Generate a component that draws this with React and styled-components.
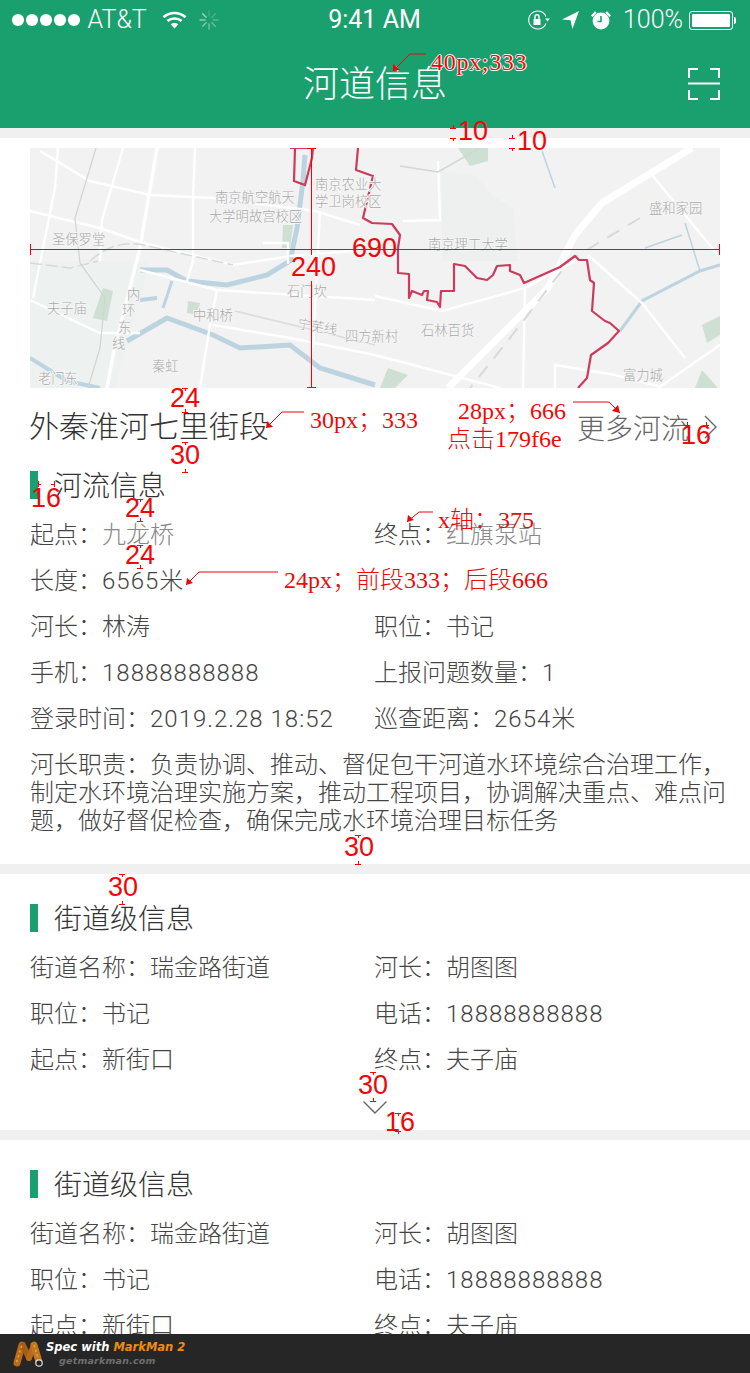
import styled, { createGlobalStyle } from "styled-components";

const GlobalStyle = createGlobalStyle`
  html, body {
    margin: 0;
    padding: 0;
    background: #fff;
  }
  body {
    font-family: Roboto, "Noto Sans CJK SC", sans-serif;
    font-weight: 300;
    color: #333;
  }
`;

const riverInfo = [
  [["起点：", "九龙桥", true], ["终点：", "红旗泵站", true]],
  [["长度：", "6565米"], null],
  [["河长：", "林涛"], ["职位：", "书记"]],
  [["手机：", "18888888888"], ["上报问题数量：", "1"]],
  [["登录时间：", "2019.2.28 18:52"], ["巡查距离：", "2654米"]],
];

const streetInfo = [
  [["街道名称：", "瑞金路街道"], ["河长：", "胡图图"]],
  [["职位：", "书记"], ["电话：", "18888888888"]],
  [["起点：", "新街口"], ["终点：", "夫子庙"]],
];

const mapLabels = [
  ["圣保罗堂", 22, 96],
  ["夫子庙", 17, 165],
  ["老门东", 8, 235],
  ["南京航空航天", 185, 54],
  ["大学明故宫校区", 179, 73],
  ["南京农业大", 285, 41],
  ["学卫岗校区", 285, 58],
  ["石门坎", 257, 148],
  ["中和桥", 163, 172],
  ["秦虹", 122, 223],
  ["四方新村", 315, 193],
  ["南京理工大学", 398, 101],
  ["石林百货", 391, 187],
  ["盛和家园", 619, 65],
  ["富力城", 593, 232],
];

const thinRoads = [
  "M10 3L60 33L120 47L183 50L285 63L330 77",
  "M0 63L70 80L113 95L203 117L260 108L323 103",
  "M93 0L72 72L70 113",
  "M165 0L163 50L163 113L157 133",
  "M28 0L25 40L3 150",
  "M0 152L70 185L110 185",
  "M110 122L187 142L345 152",
  "M187 142L180 177L170 240",
  "M290 63L283 200",
  "M183 177L260 190L345 207L470 240",
  "M408 13L410 72L373 73",
  "M345 148L412 163L495 140L545 113",
  "M558 107L612 155L655 210",
  "M622 27L688 107",
  "M628 240L690 197",
  "M525 240L525 217L585 227L628 238",
  "M495 140L493 240",
  "M233 95L258 95L258 116",
];

const waterways = [
  ["M110 122L137 122L157 133L197 137L237 127L260 113L267 80L273 33L275 7", 5],
  ["M97 193L137 170L183 187L210 200L260 197L290 220L345 237", 5],
  ["M0 210L37 233L70 240", 4],
  ["M110 152L127 150", 4],
  ["M142 133L133 160", 3],
  ["M590 183L612 153L670 123L690 117", 3],
  ["M615 100L652 87", 1.5],
  ["M670 123L655 75", 1.5],
  ["M512 3L525 40", 1.5],
];

const parks = [
  "M73 140L83 143L77 173L63 170Z",
  "M158 153L170 155L167 167L157 165Z",
  "M253 77L263 77L260 100L252 100Z",
  "M672 177L690 168L690 187L677 195Z",
  "M428 0L458 0L458 13L440 18Z",
  "M358 220L378 227L365 240L350 240Z",
  "M665 240L672 222L688 240Z",
];

const Page = styled.div`
  position: relative;
  width: 750px;
  height: 1373px;
  overflow: hidden;
  display: flex;
  flex-direction: column;
  background: #fff;
`;

const Scroll = styled.main`
  flex: 1;
  min-height: 0;
  overflow: hidden;
`;

const Header = styled.header`
  height: 128px;
  background: #1a9f6e;
  color: #fff;
  display: flex;
  flex-direction: column;
`;

const StatusBar = styled.div`
  height: 40px;
  display: grid;
  grid-template-columns: 1fr auto 1fr;
  align-items: center;
  padding: 0 13px 0 12px;
  font-size: 25px;
  line-height: 40px;
`;

const StatusGroup = styled.div`
  display: flex;
  align-items: center;
  gap: ${(p) => p.$gap || 0}px;
  margin-left: ${(p) => p.$indent || 0}px;
  justify-content: ${(p) => (p.$right ? "flex-end" : "flex-start")};
`;

const Signal = styled.div`
  display: flex;
  gap: 2.5px;
  margin-right: 8px;
`;

const Dot = styled.i`
  width: 11.5px;
  height: 11.5px;
  border-radius: 50%;
  background: #fff;
`;

const Clock = styled.span`
  font-weight: 400;
`;

const Battery = styled.div`
  position: relative;
  width: 44px;
  height: 19px;
  box-sizing: border-box;
  border: 1px solid #fff;
  border-radius: 3px;
  padding: 2px;
  margin: 0 4px 0 -5px;
  &::before {
    content: "";
    display: block;
    height: 100%;
    background: #fff;
    border-radius: 1px;
  }
  &::after {
    content: "";
    position: absolute;
    right: -4px;
    top: 5px;
    width: 2px;
    height: 7px;
    background: #fff;
    border-radius: 0 2px 2px 0;
  }
`;

const NavBar = styled.div`
  flex: 1;
  display: grid;
  grid-template-columns: 1fr auto 1fr;
  align-items: center;
  padding: 0 30px 0 30px;
`;

const NavTitle = styled.h1`
  grid-column: 2;
  margin: 2px 0 0;
  font-size: 36px;
  line-height: 44px;
  font-weight: 300;
  color: #fff;
`;

const ScanButton = styled.div`
  grid-column: 3;
  justify-self: end;
  display: flex;
  margin-top: -1px;
`;

const Divider = styled.div`
  height: 10px;
  background: #f0f0f0;
`;

const Section = styled.section`
  padding: ${(p) => p.$top}px 30px ${(p) => p.$bottom || 0}px;
`;

const MapFrame = styled.div`
  width: 690px;
  height: 240px;
  background: #f2f2f2;
  svg {
    display: block;
  }
`;

const MapLabel = styled.text`
  font-family: "Noto Sans CJK SC", sans-serif;
  font-size: 13.3px;
  fill: #a9a9a9;
  stroke: #f5f5f5;
  stroke-width: 2px;
  paint-order: stroke;
`;

const ReachRow = styled.div`
  height: 60px;
  margin-top: 9px;
  margin-bottom: 14px;
  display: flex;
  align-items: center;
  justify-content: space-between;
`;

const ReachName = styled.h2`
  margin: 0 0 0 -1px;
  font-size: 30px;
  line-height: 44px;
  font-weight: 300;
  color: #333;
`;

const MoreLink = styled.a`
  display: flex;
  align-items: center;
  gap: 15px;
  margin: -1px 3px 0 0;
  font-size: 28px;
  color: #666;
`;

const SectionTitle = styled.h3`
  margin: 0 0 13px;
  height: 28px;
  display: flex;
  align-items: center;
  gap: 16px;
  font-size: 28px;
  line-height: 28px;
  font-weight: 300;
  color: #333;
  &::before {
    content: "";
    width: 8px;
    height: 28px;
    background: #1a9f6e;
  }
  span {
    margin-top: 4px;
  }
`;

const InfoGrid = styled.div`
  display: grid;
  grid-template-columns: 344px 1fr;
  grid-auto-rows: 46px;
`;

const InfoCell = styled.div`
  font-size: 24px;
  line-height: 46px;
  color: #444;
  white-space: nowrap;
`;

const InfoValue = styled.span`
  color: ${(p) => (p.$muted ? "#888" : "#444")};
  letter-spacing: ${(p) => (p.$digits ? "1px" : "0")};
`;

const Duty = styled.p`
  margin: 9px 0 0;
  width: 700px;
  font-size: 24px;
  line-height: 28px;
  color: #444;
`;

const Expand = styled.div`
  display: flex;
  justify-content: center;
  padding: 18px 0 16px;
  svg {
    display: block;
  }
`;

const SpecBar = styled.footer`
  flex: none;
  height: 39px;
  background: #262626;
  display: flex;
  align-items: center;
  gap: 2px;
  padding-left: 12px;
  position: relative;
`;

const SpecText = styled.div`
  font-family: "DejaVu Sans", sans-serif;
  font-style: italic;
  font-weight: 700;
  font-size: 11.5px;
  line-height: 13px;
  color: #fff;
  white-space: nowrap;
  b {
    color: #f28c0f;
  }
`;

const SpecSite = styled.div`
  margin-left: 13px;
  color: #6f6f6f;
  font-size: 9.5px;
  letter-spacing: 0.2px;
`;

const MarkLayer = styled.svg`
  position: absolute;
  left: 0;
  top: 0;
  pointer-events: none;
`;

const Note = styled.span`
  position: absolute;
  left: ${(p) => p.$x}px;
  top: ${(p) => p.$y}px;
  transform: translateY(-50%);
  font-family: "Liberation Serif", "Noto Sans CJK SC", serif;
  font-size: 24px;
  font-weight: 300;
  line-height: 28px;
  color: #f00808;
  white-space: nowrap;
`;

const Measure = styled(Note)`
  font-family: "Liberation Sans", sans-serif;
  font-size: 27px;
`;

const HaloNote = styled(Note)`
  letter-spacing: 0.7px;
  text-shadow: 1px 0 #fff, -1px 0 #fff, 0 1px #fff, 0 -1px #fff;
`;

const digitsOnly = (v) => /^[\d.: 米]+$/.test(v);

const InfoRows = ({ rows }) => (
  <InfoGrid>
    {rows.flat().map((cell, i) =>
      cell ? (
        <InfoCell key={i}>
          {cell[0]}
          <InfoValue $digits={digitsOnly(cell[1])} $muted={cell[2]}>
            {cell[1]}
          </InfoValue>
        </InfoCell>
      ) : (
        <div key={i} />
      )
    )}
  </InfoGrid>
);

const Wifi = () => (
  <svg width="25" height="18" viewBox="0 0 25 18" fill="none" stroke="#fff" strokeWidth="2.6">
    <path d="M1.5 6.2C7.5 .6 17.5 .6 23.5 6.2" />
    <path d="M5.4 10C9.2 6.6 15.8 6.6 19.6 10" />
    <path d="M12.5 17.6L8.6 13.2C10.8 11.5 14.2 11.5 16.4 13.2Z" fill="#fff" stroke="none" />
  </svg>
);

const Spinner = () => (
  <svg width="20" height="20" viewBox="0 0 20 20" stroke="#fff" strokeWidth="1.4" strokeLinecap="round">
    {[...Array(8)].map((_, i) => (
      <line key={i} x1="10" y1="1" x2="10" y2="6" opacity={0.15 + i * 0.06} transform={`rotate(${i * 45} 10 10)`} />
    ))}
  </svg>
);

const OrientationLock = () => (
  <svg width="24" height="20" viewBox="0 0 24 20" fill="none" stroke="#fff" strokeWidth="1.1">
    <path d="M19 6.5A9 9 0 1 0 19 13.5" />
    <path d="M18 8.5h5l-2.5 3z" fill="#fff" stroke="none" />
    <rect x="6.5" y="9" width="7" height="6" fill="#fff" stroke="none" />
    <path d="M8 9V6.8a2 2 0 0 1 4 0V9" strokeWidth="1.4" />
  </svg>
);

const LocationArrow = () => (
  <svg width="17" height="18" viewBox="0 0 17 18" fill="#fff">
    <path d="M17 0L0 8.4L8.6 9.2L10.4 18Z" />
  </svg>
);

const Alarm = () => (
  <svg width="22" height="20" viewBox="0 0 22 20" fill="#fff">
    <circle cx="11" cy="11" r="8.4" />
    <path d="M1 5.5L5 1.2L6.8 2.8L2.6 7Z M21 5.5L17 1.2L15.2 2.8L19.4 7Z" />
    <path d="M11 6v5.5h-3.5" fill="none" stroke="#1a9f6e" strokeWidth="1.6" />
  </svg>
);

const ScanIcon = () => (
  <svg width="32" height="32" viewBox="0 0 32 32" fill="none" stroke="#fff" strokeWidth="2">
    <path d="M1 10V1H10M22 1H31V10M1 22V31H10M22 31H31V22" />
    <path d="M0 15.5H32" />
  </svg>
);

const RiverMap = () => (
  <MapFrame>
    <svg width="690" height="240" viewBox="0 0 690 240" fill="none">
      <path d="M0 113L120 113L85 240L0 240Z" fill="#edf1f0" />
      <path d="M412 23L445 27L462 47L483 60L488 113L412 113Z" fill="#eef0ef" />
      {parks.map((d) => (
        <path key={d} d={d} fill="#cde0d3" />
      ))}
      {waterways.map(([d, w]) => (
        <path key={d} d={d} stroke="#bcd4df" strokeWidth={w} />
      ))}
      {thinRoads.map((d) => (
        <path key={d} d={d} stroke="#fff" strokeWidth="2.4" />
      ))}
      <path d="M127 0L110 100L83 207L77 240" stroke="#fff" strokeWidth="3.5" />
      <path d="M662 0L572 55L545 87L518 140L418 240" stroke="#fff" strokeWidth="7" />
      <path d="M60 113C80 95 100 93 118 98L203 117" stroke="#d8d8d8" strokeWidth="1.5" strokeDasharray="12 4" />
      <path d="M0 115L40 120L68 113" stroke="#d8d8d8" strokeWidth="1.5" strokeDasharray="12 4" />
      <path d="M66 0L45 70L50 115L75 150L70 200L58 240" stroke="#d0d4d0" strokeWidth="1.2" />
      <path d="M205 163L345 197" stroke="#dcdcdc" strokeWidth="1.6" />
      <path d="M610 70L540 112L480 190L440 240" stroke="#d9d9d9" strokeWidth="2" strokeDasharray="14 10" />
      <path d="M450 0L408 24L370 18" stroke="#d0d8d2" strokeWidth="1.5" />

      <path d="M260 0H282M265 0L264 33L275 37L282 10L283 0" stroke="#cc3a5c" strokeWidth="2.2" />
      <path
        d="M328 0L326 22L343 28L333 70L342 75L362 76L370 87L368 100L368 125L379 126L379 150L382 143L392 147L394 143L398 143L397 152L407 154L410 159L411 143L424 143L424 116L435 118L447 130L457 132L463 127L467 118L480 117L480 123L490 127L494 135L530 119L545 108L549 112L557 112L560 132L564 135L562 163L575 173L580 175L589 183L578 195L561 207L557 230L548 240"
        stroke="#cc3a5c"
        strokeWidth="2.2"
        strokeLinejoin="round"
      />

      {mapLabels.map(([text, x, y]) => (
        <MapLabel key={text} x={x} y={y}>
          {text}
        </MapLabel>
      ))}
      <MapLabel x={97} y={151}>内</MapLabel>
      <MapLabel x={92} y={167}>环</MapLabel>
      <MapLabel x={88} y={184}>东</MapLabel>
      <MapLabel x={82} y={200}>线</MapLabel>
      <MapLabel x={267} y={180} transform="rotate(10 267 180)">宁芜线</MapLabel>
    </svg>
  </MapFrame>
);

const MarkManLogo = () => (
  <svg width="32" height="28" viewBox="0 0 32 28" fill="none">
    <path d="M5 23L10 5" stroke="#b8691c" strokeWidth="7" strokeLinecap="round" />
    <path d="M11 5L17 18" stroke="#a55c16" strokeWidth="6" strokeLinecap="round" />
    <path d="M22 5L17 18" stroke="#b8691c" strokeWidth="6" strokeLinecap="round" />
    <path d="M22 5L27 22" stroke="#c4761f" strokeWidth="7" strokeLinecap="round" />
    <path d="M4.5 22L10 5M22 5L26 18" stroke="#e8a544" strokeWidth="1.5" strokeDasharray="2 3" />
    <circle cx="27" cy="23" r="3.2" fill="#222" stroke="#ddd" strokeWidth="1.2" />
  </svg>
);

const T = (x, y, dir) => `M${x - 3} ${y}.5h6M${x}.5 ${y}v${dir * 3}`;
const Side = (x, y, dir) => `M${x}.5 ${y - 3}v6M${x} ${y}.5h${dir * 3}`;

const markPaths = [
  "M30 249.5H720M30.5 244V255M719.5 244V255",
  "M311.5 148V255M311.5 281V388M307 148.5H316M307 387.5H316",
  T(453, 128, -1), T(453, 138, 1),
  T(512, 138, -1), T(512, 148, 1),
  T(185, 388, 1), T(185, 412, -1),
  T(185, 442, 1), T(185, 472, -1),
  Side(687, 425, -1), Side(706, 425, 1),
  Side(38, 484, 1), Side(54, 484, -1),
  T(140, 499, 1), T(140, 521, -1),
  T(140, 545, 1), T(140, 568, -1),
  T(358, 835, 1), T(358, 864, -1),
  T(122, 874, 1), T(122, 904, -1),
  T(373, 1072, 1), T(373, 1101, -1),
  T(398, 1113, 1), T(398, 1131, 1),
];

const leaders = [
  ["M426 54H410L393 71", "393,71 393,64 400,70"],
  ["M304 412H282L266 428", "266,428 267,421 273,427"],
  ["M573 402H609L620 413", "620,413 612,411 618,405"],
  ["M433 512H419L407 522", "407,522 408,515 414,520"],
  ["M278 572H199L186 585", "186,585 187,578 193,583"],
];

const Annotations = () => (
  <>
    <MarkLayer width="750" height="1373" fill="none">
      <path d={markPaths.join("")} stroke="#f00" strokeWidth="1" />
      {leaders.map(([d, arrow]) => (
        <g key={d}>
          <path d={d} stroke="#e3090d" strokeWidth="1" />
          <polygon points={arrow} fill="#e3090d" />
        </g>
      ))}
    </MarkLayer>
    <HaloNote $x={431} $y={62}>40px;333</HaloNote>
    <Note $x={310} $y={420}>30px；333</Note>
    <Note $x={458} $y={411}>28px；666</Note>
    <Note $x={447} $y={439}>点击179f6e</Note>
    <Note $x={438} $y={520}>x轴：375</Note>
    <Note $x={284} $y={580}>24px；前段333；后段666</Note>
    <Measure $x={458} $y={131}>10</Measure>
    <Measure $x={517} $y={141}>10</Measure>
    <Measure $x={291} $y={267}>240</Measure>
    <Measure $x={352} $y={248}>690</Measure>
    <Measure $x={170} $y={398}>24</Measure>
    <Measure $x={170} $y={455}>30</Measure>
    <Measure $x={681} $y={435}>16</Measure>
    <Measure $x={31} $y={498}>16</Measure>
    <Measure $x={125} $y={508}>24</Measure>
    <Measure $x={125} $y={555}>24</Measure>
    <Measure $x={344} $y={847}>30</Measure>
    <Measure $x={108} $y={887}>30</Measure>
    <Measure $x={358} $y={1085}>30</Measure>
    <Measure $x={385} $y={1122}>16</Measure>
  </>
);

export default function App() {
  return (
    <Page>
      <GlobalStyle />
      <Header>
        <StatusBar>
          <StatusGroup>
            <Signal>
              {[...Array(5)].map((_, i) => (
                <Dot key={i} />
              ))}
            </Signal>
            <span>AT&amp;T</span>
            <StatusGroup $gap={12} $indent={15}>
              <Wifi />
              <Spinner />
            </StatusGroup>
          </StatusGroup>
          <Clock>9:41 AM</Clock>
          <StatusGroup $right $gap={11}>
            <OrientationLock />
            <LocationArrow />
            <Alarm />
            <span>100%</span>
            <Battery />
          </StatusGroup>
        </StatusBar>
        <NavBar>
          <NavTitle>河道信息</NavTitle>
          <ScanButton>
            <ScanIcon />
          </ScanButton>
        </NavBar>
      </Header>
      <Scroll>
        <Divider />
        <Section $top={10} $bottom={29}>
          <RiverMap />
          <ReachRow>
            <ReachName>外秦淮河七里街段</ReachName>
            <MoreLink>
              更多河流
              <svg width="13" height="24" viewBox="0 0 13 24" fill="none" stroke="#666" strokeWidth="1.4">
                <path d="M1 1L12 12L1 23" />
              </svg>
            </MoreLink>
          </ReachRow>
          <SectionTitle>
            <span>河流信息</span>
          </SectionTitle>
          <InfoRows rows={riverInfo} />
          <Duty>
            河长职责：负责协调、推动、督促包干河道水环境综合治理工作，制定水环境治理实施方案，推动工程项目，协调解决重点、难点问题，做好督促检查，确保完成水环境治理目标任务
          </Duty>
        </Section>
        <Divider />
        <Section $top={30}>
          <SectionTitle>
            <span>街道级信息</span>
          </SectionTitle>
          <InfoRows rows={streetInfo} />
          <Expand>
            <svg width="24" height="13" viewBox="0 0 24 13" fill="none" stroke="#666" strokeWidth="1.4">
              <path d="M.5 .5L12 12L23.5 .5" />
            </svg>
          </Expand>
        </Section>
        <Divider />
        <Section $top={30}>
          <SectionTitle>
            <span>街道级信息</span>
          </SectionTitle>
          <InfoRows rows={streetInfo} />
        </Section>
      </Scroll>
      <SpecBar>
        <MarkManLogo />
        <SpecText>
          Spec with <b>MarkMan 2</b>
          <SpecSite>getmarkman.com</SpecSite>
        </SpecText>
      </SpecBar>
      <Annotations />
    </Page>
  );
}
